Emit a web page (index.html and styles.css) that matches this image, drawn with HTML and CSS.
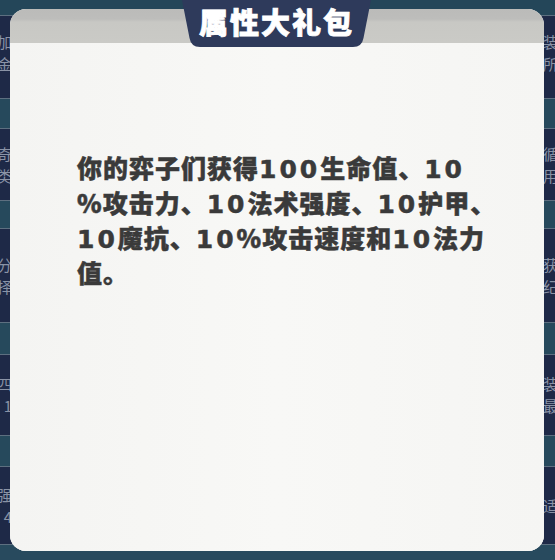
FILE: index.html
```html
<!DOCTYPE html>
<html lang="zh-CN">
<head>
<meta charset="utf-8">
<title>属性大礼包</title>
<link rel="stylesheet" href="styles.css">
</head>
<body>
<div class="page">
  <div class="bg">
    <div class="strip strip-top"></div>
    <div class="row row-a"><div class="side side-l"><span>加</span><span>金</span></div><div class="side side-r"><span>装</span><span>所</span></div></div>
    <div class="strip strip-b"></div>
    <div class="row row-b"><div class="side side-l"><span>奇</span><span>类</span></div><div class="side side-r"><span>循</span><span>用</span></div></div>
    <div class="strip strip-c"></div>
    <div class="row row-c"><div class="side side-l"><span>分</span><span>择</span></div><div class="side side-r"><span>获</span><span>纪</span></div></div>
    <div class="strip strip-d"></div>
    <div class="row row-d"><div class="side side-l"><span>四</span><span>1</span></div><div class="side side-r"><span>装</span><span>最</span></div></div>
    <div class="strip strip-e"></div>
    <div class="row row-e"><div class="side side-l"><span>强</span><span>4</span></div><div class="side side-r"><span>适</span></div></div>
    <div class="strip strip-bottom"></div>
  </div>

  <div class="card">
    <div class="card-head"></div>
    <div class="card-body">
      <p class="desc">你的弈子们获得<span class="n">100</span>生命值、<span class="n">10</span><br>%攻击力、<span class="n">10</span>法术强度、<span class="n">10</span>护甲、<br><span class="n">10</span>魔抗、<span class="n">10</span>%攻击速度和<span class="n">10</span>法力<br>值。</p>
    </div>
  </div>

  <div class="tab">
    <svg class="tab-shape" width="189" height="47" viewBox="0 0 189 47" aria-hidden="true">
      <path d="M0 0 H189 L181.5 38 Q180 47 171 47 H18 Q9 47 7.5 38 Z" fill="#2e3a5b"/>
    </svg>
    <span class="tab-title">属性大礼包</span>
  </div>
</div>
</body>
</html>
```

FILE: styles.css
```css
html, body {
  margin: 0;
  padding: 0;
}
body {
  width: 555px;
  height: 560px;
  overflow: hidden;
  background: #25485b;
  font-family: "Noto Sans CJK SC", "Noto Sans", sans-serif;
}
.page {
  position: relative;
  width: 555px;
  height: 560px;
  overflow: hidden;
}
.bg {
  display: flex;
  flex-direction: column;
  height: 560px;
}
.strip {
  background: #26495c;
  border-top: 1px solid #5d6f80;
  border-bottom: 1px solid #5d6f80;
  box-sizing: border-box;
}
.strip-top { height: 16px; border-top: none; background: #244659; }
.strip-b { height: 31px; }
.strip-c { height: 29px; }
.strip-d { height: 33px; }
.strip-e { height: 32px; }
.strip-bottom { flex: 1; border-bottom: none; background: #284a5e; }
.row {
  background: #1e2947;
  display: flex;
  justify-content: space-between;
  align-items: center;
  box-sizing: border-box;
}
.row-a { height: 82px; padding-bottom: 8px; }
.row-b { height: 71px; }
.row-c { height: 93px; }
.row-d { height: 80px; }
.row-e { height: 77px; }
.side {
  width: 12px;
  display: flex;
  flex-direction: column;
  font-size: 15px;
  line-height: 22px;
  color: #8a93a6;
  white-space: nowrap;
}
.side-l { align-items: flex-end; }
.side-r { align-items: flex-start; }

.card {
  position: absolute;
  left: 10px;
  top: 9px;
  width: 534px;
  height: 542px;
  border-radius: 16px;
  overflow: hidden;
  background: #f6f6f4;
  box-shadow: inset 0 -3px 0 #d6d6d4;
  display: flex;
  flex-direction: column;
}
.card-head {
  height: 34px;
  flex: none;
  background: linear-gradient(#bbbbb9 0, #bdbdbb 10px, #c8c8c4 13px, #cacac6 100%);
}
.card-body {
  flex: 1;
  padding: 108px 0 0 67px;
  background: linear-gradient(90deg, #f4f4f2, #f8f8f6 50%, #f5f5f3);
}
.desc {
  margin: 0;
  font-size: 25px;
  line-height: 32px;
  font-weight: 900;
  color: #3a3a3a;
  letter-spacing: 1px;
  white-space: nowrap;
  -webkit-text-stroke: 0.5px #3a3a3a;
}
.n {
  font-family: "DejaVu Sans", sans-serif;
  font-weight: 700;
  letter-spacing: 3px;
}

.tab {
  position: absolute;
  left: 182px;
  top: 0;
  width: 189px;
  height: 47px;
  display: flex;
  justify-content: center;
  align-items: flex-start;
}
.tab-shape {
  position: absolute;
  left: 0;
  top: 0;
}
.tab-title {
  position: relative;
  margin-top: 2px;
  font-size: 29px;
  line-height: 38px;
  font-weight: 900;
  color: #ffffff;
  letter-spacing: 2px;
  -webkit-text-stroke: 0.8px #ffffff;
}
```
